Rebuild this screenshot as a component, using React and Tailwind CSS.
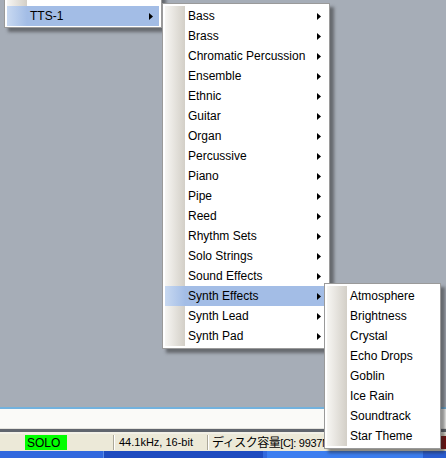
import React from 'react';

const mainItems = [
  'Bass', 'Brass', 'Chromatic Percussion', 'Ensemble', 'Ethnic', 'Guitar', 'Organ',
  'Percussive', 'Piano', 'Pipe', 'Reed', 'Rhythm Sets', 'Solo Strings', 'Sound Effects',
  'Synth Effects', 'Synth Lead', 'Synth Pad',
];

const synthFx = [
  'Atmosphere', 'Brightness', 'Crystal', 'Echo Drops', 'Goblin', 'Ice Rain', 'Soundtrack', 'Star Theme',
];

function Arrow() {
  return (
    <svg width="4" height="7" viewBox="0 0 4 7" className="shrink-0">
      <path d="M0 0L4 3.5L0 7Z" fill="#000" />
    </svg>
  );
}

function MenuItem({ label, sub, active }) {
  return (
    <div
      className={
        'flex h-[20px] items-center pr-[6px] ' +
        (active ? 'bg-[linear-gradient(90deg,#c8d9f1,#a3bde6_20px,#a3bde6)]' : '')
      }
    >
      <span className="flex-1 pl-[23px] whitespace-nowrap">{label}</span>
      {sub && <Arrow />}
    </div>
  );
}

// popup menu, XP style with the grey gradient strip on the left
function Menu({ className, items, activeIndex, sub, pad = 'py-[2px]' }) {
  return (
    <div
      className={
        'absolute border border-[#9a9a9a] bg-white px-[2px] shadow-[4px_4px_3px_rgba(40,40,40,0.5)] ' +
        pad + ' ' + className
      }
    >
      <div className="bg-[linear-gradient(90deg,#f7f6f3,#d3cfc7_20px,#ffffff_20px)]">
        {items.map((it, i) => (
          <MenuItem key={i} label={it} sub={sub} active={i === activeIndex} />
        ))}
      </div>
    </div>
  );
}

function Sep() {
  return <div className="h-[15px] w-[2px] border-l border-[#aca899] border-r-white" style={{ borderRightWidth: 1 }} />;
}

export default function App() {
  return (
    <div
      className="relative flex h-[458px] w-[446px] flex-col overflow-hidden bg-[#a6adb7] text-[12px] text-black"
      style={{ fontFamily: '"Liberation Sans", Arial, sans-serif' }}
    >
      <div className="flex-1" />

      {/* editor area */}
      <div className="h-[2px] bg-[#72b2de]" />
      <div className="h-[20px] bg-[#fafaf8] border-b border-[#e4e3de]" />
      <div className="h-[3px] bg-[#60656d]" />
      <div className="h-[2px] bg-[#f2f0e6]" />

      {/* status bar */}
      <div className="flex h-[17px] items-center bg-[#ece9d8] whitespace-nowrap text-[11px]">
        <div className="w-[23px]" />
        <div className="ml-[2px] flex h-[15px] w-[42px] items-center bg-[#00ff00] pl-[2px] text-[12px] leading-none">SOLO</div>
        <div className="w-[46px]" />
        <Sep />
        <span className="ml-[4px] w-[88px] leading-none">44.1kHz, 16-bit</span>
        <Sep />
        <span
          className="ml-[3px] flex-1 leading-none tracking-[-0.3px]"
          style={{ fontFamily: '"Liberation Sans", "Noto Sans CJK JP", sans-serif' }}
        >
          <span className="text-[12px] tracking-[-0.5px]">ディスク容量</span>[C]: 9937M
        </span>
        <div className="h-[13px] w-[6px] bg-[#7a0b0b]" />
      </div>

      {/* taskbar strip */}
      <div className="flex h-[7px] bg-[#3168de]">
        <div className="w-[103px]" />
        <div className="w-[160px] bg-[#1e4bbf] border-l border-[#5b8ce6]" />
        <div className="w-[4px]" />
        <div className="w-[156px] bg-[#3c7ef0]" />
        <div className="flex-1 bg-[#2a5dd2]" />
      </div>

      {/* parent menu */}
      <Menu
        className="left-[4px] top-[-17px] w-[158px]"
        pad="pt-[2px] pb-[1px]"
        items={['', 'TTS-1']}
        activeIndex={1}
        sub
      />

      {/* instrument groups */}
      <Menu
        className="left-[162px] top-[3px] w-[168px]"
        items={mainItems}
        activeIndex={14}
        sub
      />

      {/* Synth Effects */}
      <Menu className="left-[324px] top-[283px] w-[117px]" items={synthFx} activeIndex={-1} />
    </div>
  );
}
